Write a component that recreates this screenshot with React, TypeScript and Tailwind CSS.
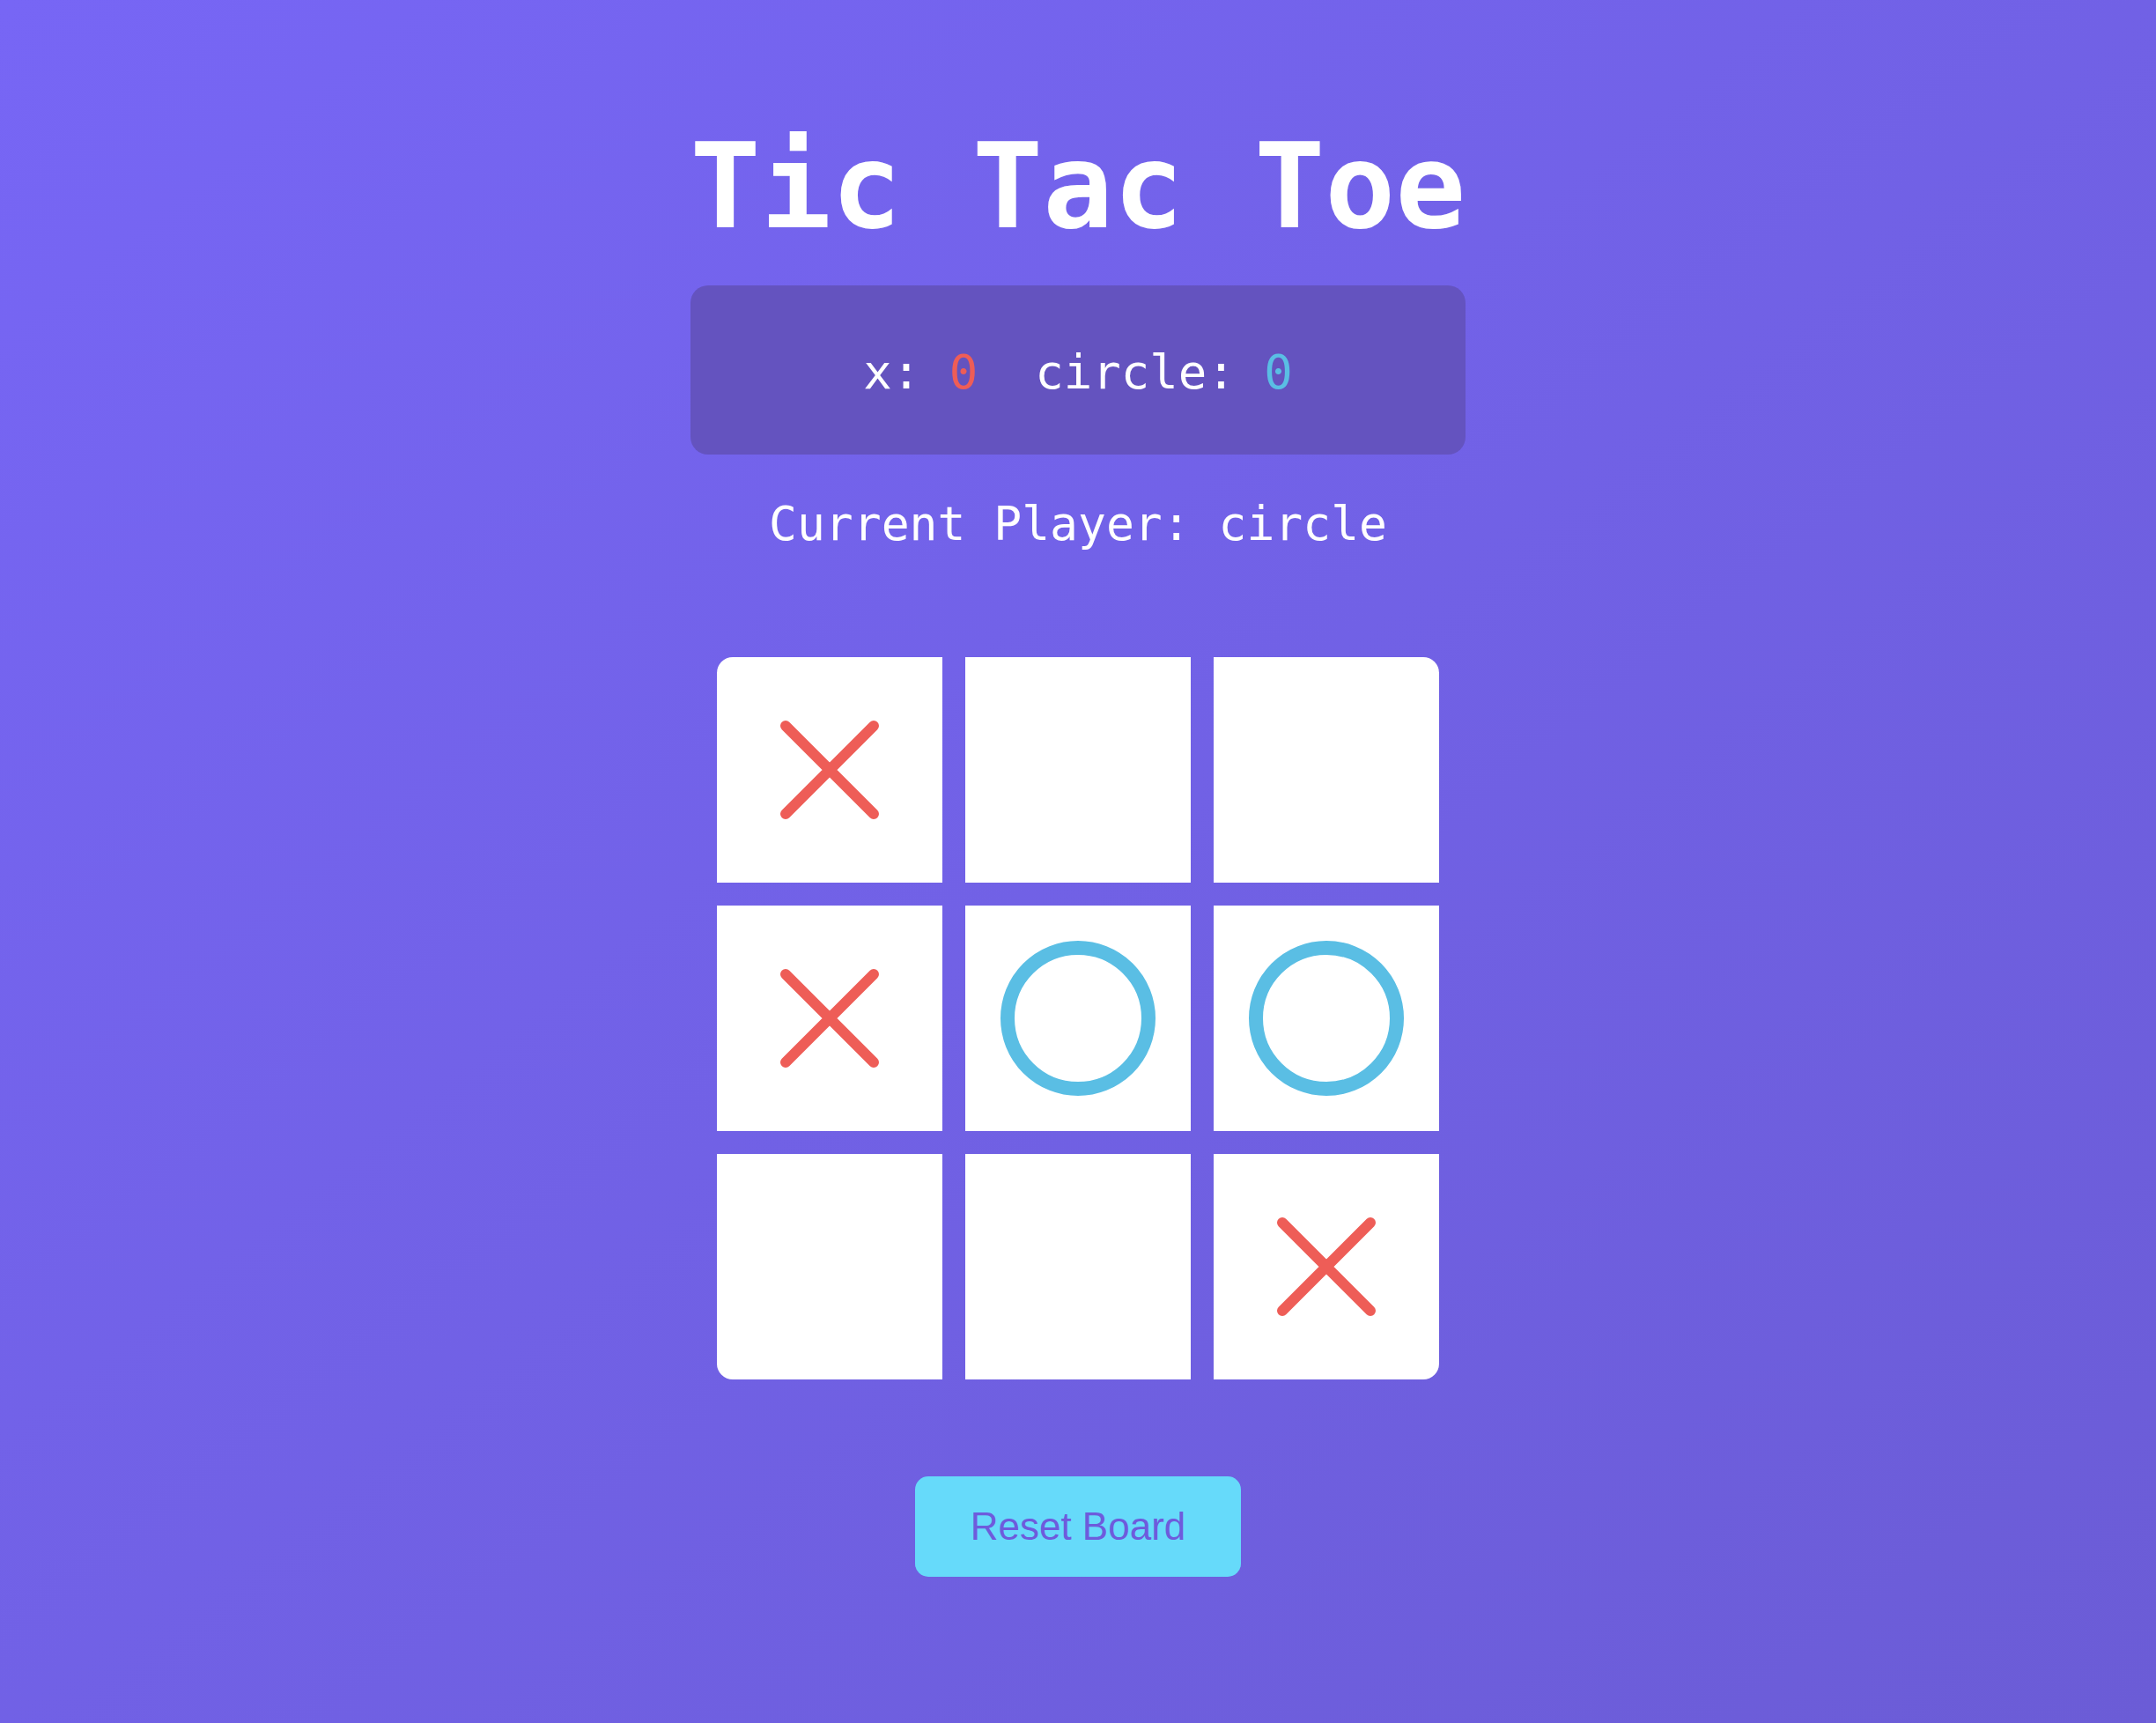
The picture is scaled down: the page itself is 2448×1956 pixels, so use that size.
const board = ["x", "", "", "x", "o", "o", "", "", "x"];

function Cross() {
  return (
    <svg width="120" height="120" viewBox="0 0 120 120">
      <path d="M10 10 L110 110 M110 10 L10 110" stroke="#ee5d57" strokeWidth="12" strokeLinecap="round" fill="none" />
    </svg>
  );
}

function Ring() {
  return (
    <svg width="180" height="180" viewBox="0 0 180 180">
      <circle cx="90" cy="90" r="80" stroke="#5abee4" strokeWidth="16" fill="none" />
    </svg>
  );
}

export default function App() {
  return (
    <div className="min-h-screen w-full bg-gradient-to-br from-[#7766f5] to-[#6b5cd6] flex flex-col items-center font-['DejaVu_Sans_Mono',monospace] text-white">
      <h1 className="mt-[146px] text-[133px] leading-none font-bold">Tic Tac Toe</h1>

      {/* score panel */}
      <div className="mt-[45px] w-[880px] h-[192px] rounded-[20px] bg-[#6453bf] flex items-center justify-center pt-[6px] text-[54px] leading-none whitespace-pre">
        <span>x: </span>
        <span className="text-[#ee5d57]">0</span>
        <span>  circle: </span>
        <span className="text-[#5abee4]">0</span>
      </div>

      <p className="mt-[52px] text-[53px] leading-none">Current Player: circle</p>

      <div className="mt-[125px] grid grid-cols-3 gap-[26px] w-[820px] rounded-[18px] overflow-hidden">
        {board.map((cell, i) => (
          <div key={i} className="h-[256px] bg-white flex items-center justify-center">
            {cell === "x" && <Cross />}
            {cell === "o" && <Ring />}
          </div>
        ))}
      </div>

      <button className="mt-[110px] w-[370px] h-[114px] rounded-[15px] bg-[#66dafa] text-[#6e5bdc] text-[44px] font-['Liberation_Sans',Arial,sans-serif]">
        Reset Board
      </button>
    </div>
  );
}
